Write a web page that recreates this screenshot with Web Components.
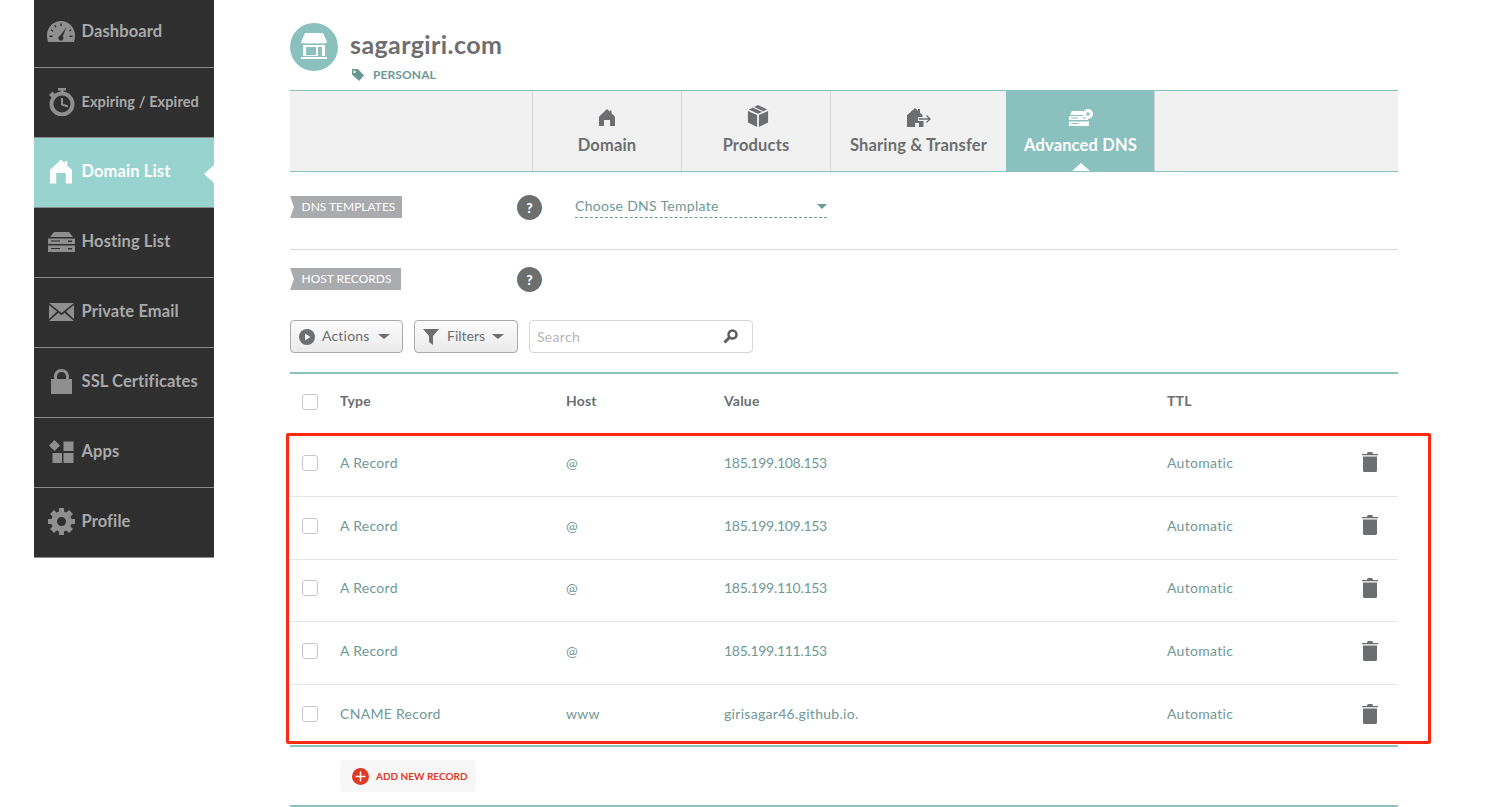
<!DOCTYPE html>
<html lang="en"><head><meta charset="utf-8"><title>Advanced DNS</title>
<style>
html,body{margin:0;padding:0;height:807px;overflow:hidden;background:#fff;font-family:Lato,"Open Sans",sans-serif}
nc-app{display:flex}
</style></head><body>
<nc-app>
  <nc-sidebar>
    <nc-nav icon="gauge" label="Dashboard"></nc-nav>
    <nc-nav icon="watch" label="Expiring / Expired" small></nc-nav>
    <nc-nav icon="house" label="Domain List" active></nc-nav>
    <nc-nav icon="server" label="Hosting List"></nc-nav>
    <nc-nav icon="mail" label="Private Email"></nc-nav>
    <nc-nav icon="lock" label="SSL Certificates"></nc-nav>
    <nc-nav icon="apps" label="Apps"></nc-nav>
    <nc-nav icon="gear" label="Profile"></nc-nav>
  </nc-sidebar>
  <nc-main>
    <nc-domain-head name="sagargiri.com" tag="PERSONAL"></nc-domain-head>
    <nc-tabs>
      <nc-tab icon="thouse" label="Domain" w="149"></nc-tab>
      <nc-tab icon="box" label="Products" w="149"></nc-tab>
      <nc-tab icon="share" label="Sharing &amp; Transfer" w="176"></nc-tab>
      <nc-tab icon="dns" label="Advanced DNS" w="149" active></nc-tab>
    </nc-tabs>
    <nc-dns-templates></nc-dns-templates>
    <nc-host-head></nc-host-head>
    <nc-toolbar></nc-toolbar>
    <nc-table>
      <nc-row type="A Record" host="@" value="185.199.108.153"></nc-row>
      <nc-row type="A Record" host="@" value="185.199.109.153"></nc-row>
      <nc-row type="A Record" host="@" value="185.199.110.153"></nc-row>
      <nc-row type="A Record" host="@" value="185.199.111.153"></nc-row>
      <nc-row type="CNAME Record" host="www" value="girisagar46.github.io." last></nc-row>
    </nc-table>
    <nc-add-bar></nc-add-bar>
    <nc-annotation></nc-annotation>
  </nc-main>
</nc-app>
<script>
const ICONS = {
  gauge:`<svg width="28" height="21" viewBox="0 0 28 21"><path fill="#8f8f8f" fill-rule="evenodd" d="M14 0C6 0 0 6.500 0 14.500C0 16.500.3 18.800 1 21H27C27.700 18.800 28 16.500 28 14.500C28 6.500 22 0 14 0ZM19.500 6L15.800 15.200A2.600 2.600 0 1 1 13.300 14.500ZM14 2.500h.8v2.500h-1.600v-2.500ZM7.300 4.300l1 -.6 1.300 2.100-1.300.8ZM3.600 9.200l.6-1 2.200 1.200-.8 1.400ZM2.500 14.500h3v1.600h-3ZM22.500 14.500h3v1.600h-3ZM21.800 9.400l2.200-1.200.6 1-2.100 1.300Z"/></svg>`,
  watch:`<svg width="27" height="28" viewBox="0 0 27 28"><g fill="none" stroke="#8f8f8f"><circle cx="14" cy="16" r="10.500" stroke-width="4"/><path d="M14 10V16.500L20 18.500" stroke-width="2"/></g><path fill="#8f8f8f" d="M10 0h8v2.500h-2.500V5h-3V2.500H10ZM1 7L4.500 3.500 7 6 3.500 9.500Z"/></svg>`,
  house:`<svg width="22" height="25" viewBox="0 0 23 25"><path fill="#fff" d="M11.500 0L15.500 3.800V1.500H18V6.300L23 11V25H16.500V14H6.500V25H0V11Z"/></svg>`,
  server:`<svg width="27" height="20" viewBox="0 0 27 20"><path fill="#8f8f8f" d="M6 0H21L25 5H2ZM0 6.500H27V12H0ZM0 13.500H27V20H0Z"/><g fill="#2f2f30"><rect x="3" y="8.500" width="9" height="1"/><rect x="3" y="16" width="9" height="1"/><rect x="20" y="8.500" width="4" height="1.500"/><rect x="20" y="16" width="4" height="1.500"/></g></svg>`,
  mail:`<svg width="25" height="18" viewBox="0 0 25 18"><path fill="#8f8f8f" d="M0 0H25L12.500 10ZM0 2L8 8.500 0 16ZM25 2L17 8.500 25 16ZM9.500 9.800L12.500 12.200 15.500 9.800 25 18H0Z"/></svg>`,
  lock:`<svg width="21" height="25" viewBox="0 0 21 25"><path fill="#8f8f8f" d="M0 10H3V7.500C3 3 6.200 0 10.500 0S18 3 18 7.500V10H21V25H0ZM6 10H15V7.500C15 4.800 13 3 10.500 3S6 4.800 6 7.500Z"/></svg>`,
  apps:`<svg width="25" height="23" viewBox="0 0 25 23"><path fill="#8f8f8f" d="M5.500 0L11 5.500 5.500 11 0 5.500ZM14.500 1.500H24.500V11H14.500ZM3.500 13H13V23H3.500ZM14.500 13H24.500V23H14.500Z"/></svg>`,
  gear:`<svg width="27" height="27" viewBox="0 0 27 27"><path fill="#8f8f8f" fill-rule="evenodd" d="M11 0H16V3.500L18.500 4.500 21 2 25 6 22.500 8.500 23.500 11H27V16H23.500L22.500 18.500 25 21 21 25 18.500 22.500 16 23.500V27H11V23.500L8.500 22.500 6 25 2 21 4.500 18.500 3.500 16H0V11H3.500L4.500 8.500 2 6 6 2 8.500 4.500 11 3.500ZM13.500 9A4.500 4.500 0 1 0 13.500 18A4.500 4.500 0 1 0 13.500 9Z"/></svg>`,
  thouse:`<svg width="16" height="17" viewBox="0 0 16 17"><path fill="#6d6e70" d="M8 0L11 2.800V1.500H12.500V4.300L16 7.800V17H11V11H5V17H0V7.800Z"/></svg>`,
  box:`<svg width="22" height="22" viewBox="0 0 22 24" style="margin:-2px 0 0 3px"><path fill="#6d6e70" d="M11 0L21 4.800 11 9.500 1 4.800ZM0 6.500L10 11V24L0 19ZM22 6.500V19L12 24V11Z"/><path stroke="#f1f1f1" stroke-width="1.200" d="M6 2.500L16 7.200"/></svg>`,
  share:`<svg width="24" height="19" viewBox="0 0 24 19"><path fill="#6d6e70" d="M8 0L11 2.800V1H13V4.700L15.500 7V9H11V13H16.500V19H12V15H8V19H0V7.300Z"/><path fill="none" stroke="#6d6e70" stroke-width="1.300" d="M12 11H23M19.500 7.500L23 11 19.500 14.500"/></svg>`,
  dns:`<svg width="24" height="17" viewBox="0 0 24 17"><path fill="#fff" d="M3 2H14L16 6H1ZM0 7H19V11H0ZM0 12.500H20V17H0Z"/><circle cx="19" cy="5" r="5" fill="#fff"/><circle cx="19" cy="5" r="1.800" fill="#8ac0bd"/><g fill="#8ac0bd"><rect x="2" y="8.500" width="7" height="1"/><rect x="2" y="14" width="7" height="1"/><rect x="14" y="8.500" width="3" height="1"/></g></svg>`
};
function el(tag, css, html){
  customElements.define(tag, class extends HTMLElement{
    connectedCallback(){
      if(this.shadowRoot) return;
      const r=this.attachShadow({mode:'open'});
      const a=n=>this.getAttribute(n)||'';
      r.innerHTML=`<style>${css}</style>`+(typeof html==='function'?html(a,this):html);
    }
  });
}
el('nc-sidebar',`:host{display:block;width:180px;margin-left:34px;margin-top:-2px;flex:none;background:#2f2f30;align-self:flex-start;font-family:Lato,sans-serif}`,`<slot></slot>`);
el('nc-nav',`:host{display:flex;align-items:center;height:69px;box-sizing:content-box;padding-bottom:0;border-bottom:1px solid #8c8c8c;position:relative;color:#a9a9a9;font-weight:700;font-size:16.500px;letter-spacing:.1px}
:host([active]){background:#98d3cf;color:#fff}
:host([small]){font-size:14.500px}
.i{width:34px;margin-left:10px;margin-right:3.500px;display:flex;justify-content:center;align-items:center;flex:none;position:relative;top:-1px}
.l{position:relative;top:-1.500px}
svg{display:block}
.n{position:absolute;right:0;top:27px;width:0;height:0;border:9px solid transparent;border-left:0;border-right:10px solid #fff}`,
(a,h)=>`<span class="i">${ICONS[a('icon')]}</span><span class="l">${a('label')}</span>${h.hasAttribute('active')?'<span class="n"></span>':''}`);
el('nc-main',`:host{display:block;position:relative;width:1108px;margin-left:76px;flex:none;font-family:Lato,sans-serif}`,`<slot></slot>`);
el('nc-domain-head',`:host{display:flex;height:90px;box-sizing:border-box;padding-top:23px;gap:12px}
.c{width:48px;height:48px;border-radius:50%;background:#8ac0bd;flex:none}
svg{display:block}
h1{margin:0;font-size:25px;line-height:28px;margin-top:7px;font-weight:700;color:#6d6e70;letter-spacing:.4px}
.t{display:flex;align-items:center;gap:9px;margin-top:10px;margin-left:2px;font-size:12px;font-weight:700;color:#6b9897;letter-spacing:.1px;line-height:14px}`,
a=>`<div class="c"><svg width="48" height="48" viewBox="0 0 48 48"><path fill="#fff" d="M15 10H33L37 19Q36 21 34 20Q32.500 21 31 20Q29.500 21 28 20Q26 21 24 20Q22 21 20 20Q18.500 21 17 20Q15.500 21 14 20Q12 21 11 19Z"/><path fill="#fff" fill-rule="evenodd" d="M13 22H35V33H13ZM16 24V32H26V24ZM28 24V33H32V24Z"/><rect x="18" y="25" width="7" height="6" fill="#8ac0bd"/><rect x="11" y="34" width="26" height="2" fill="#fff"/></svg></div>
<div><h1>${a('name')}</h1><div class="t"><svg width="12" height="12" viewBox="0 0 12 12"><path fill="#6b9897" fill-rule="evenodd" d="M0 0H6L12 6.500 7 12 0 5.500ZM2.500 1.500A1.200 1.200 0 1 0 2.500 3.900A1.200 1.200 0 1 0 2.500 1.500Z"/></svg><span>${a('tag')}</span></div></div>`);
el('nc-tabs',`:host{display:flex;height:82px;box-sizing:border-box;background:#f1f1f1;border-top:1px solid #8ac0bd;border-bottom:1px solid #8ac0bd;padding-left:242px}`,`<slot></slot>`);
el('nc-tab',`:host{display:flex;flex-direction:column;align-items:center;box-sizing:border-box;border-left:1px solid #d5d5d5;color:#6d6e70;font-weight:700;font-size:16.500px;letter-spacing:.15px;position:relative}
:host(:last-child){border-right:1px solid #d5d5d5}
:host([active]){background:#8ac0bd;color:#fff;border-left-color:#8ac0bd}
.i{height:24px;margin-top:14px;display:flex;align-items:center;justify-content:center}
svg{display:block}
.l{margin-top:6px;line-height:20px;white-space:nowrap}
.n{position:absolute;bottom:0;left:50%;margin-left:-9px;border:9px solid transparent;border-top:0;border-bottom:8px solid #fff;width:0;height:0}`,
(a,h)=>{h.style.width=a('w')+'px';return `<span class="i">${ICONS[a('icon')]}</span><span class="l">${a('label')}</span>${h.hasAttribute('active')?'<span class="n"></span>':''}`});
el('nc-section-tag',`:host{display:flex;align-items:center;height:22px;box-sizing:border-box;background:#a9abae;color:#fff;font-size:12px;padding:0 0 1px 11.500px;clip-path:polygon(0 0,100% 0,100% 100%,0 100%,4px 50%);white-space:nowrap;flex:none;letter-spacing:0}`,`<slot></slot>`);
el('nc-help',`:host{display:flex;width:25px;height:25px;border-radius:50%;background:#6d6e70;color:#fff;align-items:center;justify-content:center;font-weight:900;font-size:14px;flex:none}`,`?`);
el('nc-dns-templates',`:host{display:flex;height:78px;box-sizing:border-box;padding-top:24px;border-bottom:1px solid #d9d9d9}
.s{width:227px;flex:none;display:flex}
nc-section-tag{width:112px}
nc-help{margin-top:-1px}
.sel{margin-left:33px;width:252px;height:22px;box-sizing:border-box;border-bottom:1px dashed #6b9897;color:#6f9896;font-size:14px;letter-spacing:.3px;display:flex;justify-content:space-between;align-items:center;padding:0 0 2px}
.sel i{width:0;height:0;border:5px solid transparent;border-top:5px solid #6b9897;border-bottom:0;margin-top:2px}`,
`<div class="s"><nc-section-tag>DNS TEMPLATES</nc-section-tag></div><nc-help></nc-help><div class="sel"><span>Choose DNS Template</span><i></i></div>`);
el('nc-host-head',`:host{display:flex;padding-top:18px;height:22px}
.s{width:227px;flex:none;display:flex}
nc-section-tag{width:111px}
nc-help{margin-top:-1px}`,`<div class="s"><nc-section-tag>HOST RECORDS</nc-section-tag></div><nc-help></nc-help>`);
el('nc-toolbar',`:host{display:flex;gap:11px;margin-top:30px;height:33px}
.b{box-sizing:border-box;height:33px;border:1px solid #aaa;border-radius:4px;background:linear-gradient(#fbfbfb,#ebebeb);display:flex;align-items:center;color:#6d6e70;font-size:14px;letter-spacing:.2px;padding:0 0 2px 8px}
.car{width:0;height:0;border:6px solid transparent;border-top:5.500px solid #6d6e70;border-bottom:0;margin-left:8px;margin-top:2px}
svg{display:block;flex:none}
.q{box-sizing:border-box;width:224px;height:33px;border:1px solid #d6d6d6;border-radius:4px;display:flex;align-items:center;justify-content:space-between;padding:0 14px 0 7px;color:#b5b5b5;font-size:14px;letter-spacing:.3px}`,
`<div class="b" style="width:113px"><svg width="16" height="16" viewBox="0 0 16 16" style="margin:2px 7px 0 0"><circle cx="8" cy="8" r="8" fill="#6d6e70"/><path d="M6 4.500L11.500 8 6 11.500Z" fill="#f4f4f4"/></svg>Actions<span class="car"></span></div>
<div class="b" style="width:104px"><svg width="16" height="18" viewBox="0 0 16 18" style="margin:2px 8px 0 0"><path d="M0 1H16L10 8V17L6 14V8Z" fill="#6d6e70"/></svg><span style="letter-spacing:0">Filters</span><span class="car" style="margin-left:7px"></span></div>
<div class="q"><span>Search</span><svg width="15" height="15" viewBox="0 0 15 15"><circle cx="9.500" cy="5.500" r="4" fill="none" stroke="#5c5d5f" stroke-width="2.500"/><path d="M6.500 8.500L1.500 13.500" stroke="#5c5d5f" stroke-width="3"/></svg></div>`);
const GRID='display:grid;grid-template-columns:50px 226px 158px 443px 195px 1fr;align-items:center;';
const CHECK=`width:16px;height:16px;box-sizing:border-box;border:1px solid #c8c8c8;border-radius:3px;margin-left:12px;background:#fff;`;
el('nc-table',`:host{display:block;margin-top:19px;border-top:2px solid #8ac0bd;border-bottom:2px solid #8ac0bd}
.h{${GRID}height:60px;padding-bottom:8px;box-sizing:border-box;color:#6d6e70;font-weight:700;font-size:14px;letter-spacing:.2px}
.c{${CHECK}margin-top:3px}`,
`<div class="h"><div class="c"></div><div>Type</div><div>Host</div><div>Value</div><div>TTL</div></div><slot></slot>`);
el('nc-row',`:host{${GRID}height:62.800px;box-sizing:border-box;border-bottom:1px solid #e6e6e6;padding-bottom:5px;color:#6f9896;font-size:14px;letter-spacing:.3px}
:host([last]){height:60.200px;border-bottom:0;padding-bottom:3px}
.c{${CHECK}margin-top:1px}
.num{letter-spacing:-.3px}
svg{display:block}`,
a=>`<div class="c"></div><div>${a('type')}</div><div>${a('host')}</div><div class="${/^\d/.test(a('value'))?'num':''}">${a('value')}</div><div>Automatic</div><svg width="16" height="20" viewBox="0 0 16 20"><path fill="#6d6e70" d="M5 1.500Q5 0 6.500 0H9.500Q11 0 11 1.500V2H16V3.200H0V2H5ZM1 4.500H15V18.500Q15 20 13.500 20H2.500Q1 20 1 18.500Z"/></svg>`);
el('nc-add-bar',`:host{display:block;height:60px;box-sizing:border-box;padding:13px 0 0 50px;border-bottom:2px solid #8ac0bd}
.a{display:inline-flex;align-items:center;box-sizing:border-box;height:32px;width:136px;padding-left:12px;gap:7px;background:#f7f7f7;border-radius:4px;color:#e03a26;font-weight:700;font-size:10px;letter-spacing:0;white-space:nowrap}
svg{display:block;flex:none}`,
`<span class="a"><svg width="17" height="17" viewBox="0 0 17 17"><circle cx="8.500" cy="8.500" r="8.500" fill="#e03a26"/><path d="M8.500 3.500V13.500M3.500 8.500H13.500" stroke="#f7f7f7" stroke-width="1.500"/></svg>ADD NEW RECORD</span>`);
el('nc-annotation',`:host{position:absolute;left:-4px;top:433px;width:1145px;height:311px;box-sizing:border-box;border:3px solid #ff2a0f;border-radius:2px;pointer-events:none}`,``);
el('nc-app',`:host{display:flex;align-items:flex-start}`,`<slot></slot>`);
</script>
</body></html>
